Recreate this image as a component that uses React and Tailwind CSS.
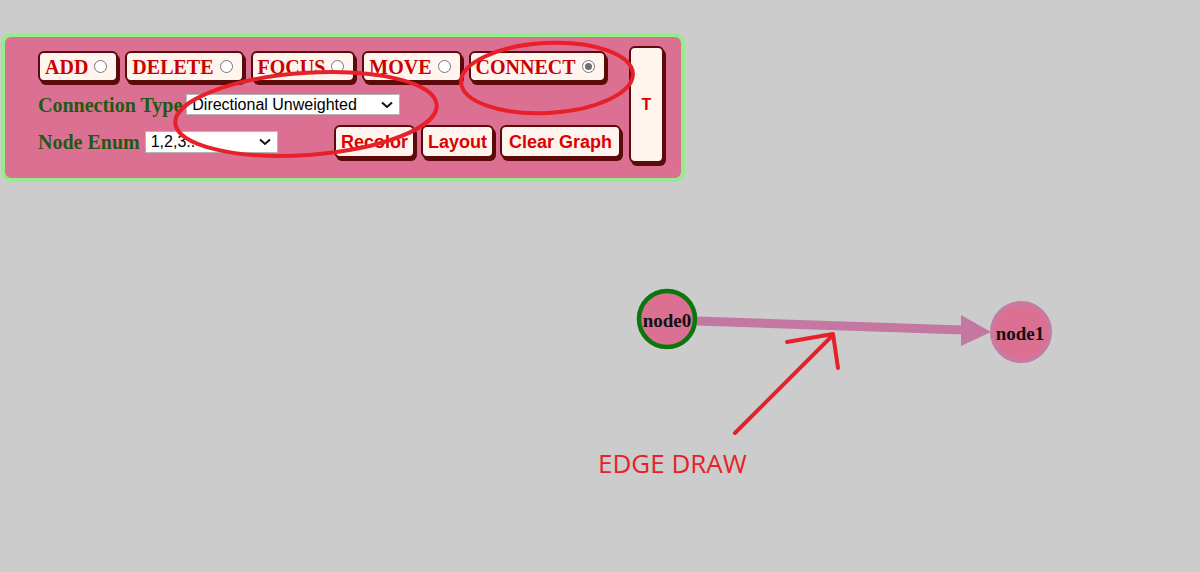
import React from "react";

const serif = "font-['Liberation_Serif','Times_New_Roman',serif]";
const sans = "font-['Liberation_Sans',Arial,sans-serif]";

function Radio({ checked }) {
  return (
    <span className="ml-[6px] mb-[1px] w-[13px] h-[13px] rounded-full border border-[#767676] bg-white flex items-center justify-center shrink-0">
      {checked && <span className="w-[7px] h-[7px] rounded-full bg-[#6f6f6f]" />}
    </span>
  );
}

function ModeButton({ label, checked }) {
  return (
    <div className={`h-[31px] flex items-center pl-[5px] pr-[9px] border-2 border-[#5c0a0a] rounded-[6px] bg-[#fff5ee] shadow-[2px_3px_0_#5c0a0a] ${serif} font-bold text-[20px] leading-none text-[#cc0000]`}>
      <span className="pt-[1px]">{label}</span>
      <Radio checked={checked} />
    </div>
  );
}

function ActionButton({ label, wide }) {
  return (
    <div className={`h-[33px] flex items-center ${wide ? "px-[7px]" : "px-[5px]"} border-2 border-[#5c0a0a] rounded-[6px] bg-[#fff5ee] shadow-[2px_3px_0_#5c0a0a] ${sans} font-bold text-[18px] leading-none text-[#dd0000]`}>
      {label}
    </div>
  );
}

function Select({ value, width, height }) {
  return (
    <div
      className={`${width} ${height} bg-white border border-[#b5b5b5] flex items-center justify-between pl-[5px] pr-[6px] ${sans} text-[16px] leading-none text-black`}
    >
      <span>{value}</span>
      <svg width="12" height="8" viewBox="0 0 12 8" className="shrink-0">
        <path d="M1 1.5 L6 6 L11 1.5" fill="none" stroke="#111" strokeWidth="2" />
      </svg>
    </div>
  );
}

export default function App() {
  return (
    <div className="relative w-[1200px] h-[572px] bg-[#cccccc] overflow-hidden">
      <div className="pt-[33px] pl-[1px]">
        <div className="w-[684px] h-[149px] rounded-[10px] border-4 border-[#94ec8c] bg-[#db7093] flex items-start pl-[33px] pt-[9px]">
          <div className="w-[583px] mt-[5px] flex flex-col">
            <div className="flex gap-[7px]">
              <ModeButton label="ADD" />
              <ModeButton label="DELETE" />
              <ModeButton label="FOCUS" />
              <ModeButton label="MOVE" />
              <ModeButton label="CONNECT" checked />
            </div>
            <div className="mt-[12px] h-[21px] flex items-center">
              <span className={`${serif} font-bold text-[20px] leading-none text-[#1f5a14]`}>Connection Type</span>
              <div className="ml-[4px]">
                <Select value="Directional Unweighted" width="w-[214px]" height="h-[21px]" />
              </div>
            </div>
            <div className="mt-[10px] h-[36px] flex items-start">
              <div className="h-[33px] flex items-center">
                <span className={`${serif} font-bold text-[20px] leading-none text-[#1f5a14]`}>Node Enum</span>
                <div className="ml-[5px]">
                  <Select value="1,2,3.." width="w-[133px]" height="h-[22px]" />
                </div>
              </div>
              <div className="ml-auto flex gap-[6px]">
                <ActionButton label="Recolor" />
                <ActionButton label="Layout" />
                <ActionButton label="Clear Graph" wide />
              </div>
            </div>
          </div>
          <div className={`ml-[8px] w-[35px] h-[117px] flex items-center justify-center border-2 border-[#5c0a0a] rounded-[6px] bg-[#fff5ee] shadow-[2px_3px_0_#5c0a0a] ${sans} font-bold text-[16px] text-[#dd0000]`}>
            T
          </div>
        </div>
      </div>

      <svg className="absolute inset-0 pointer-events-none" width="1200" height="572" viewBox="0 0 1200 572">
        {/* edge */}
        <line x1="697" y1="321" x2="963" y2="330" stroke="#c477a0" strokeWidth="9" />
        <polygon points="991,332 961,315 961,346" fill="#c477a0" />
        {/* node0 */}
        <circle cx="667" cy="319" r="28" fill="#db7093" stroke="#0b760b" strokeWidth="4.5" />
        <text x="667" y="320" textAnchor="middle" dominantBaseline="central" fontFamily="'Liberation Serif', 'Times New Roman', serif" fontWeight="bold" fontSize="19" fill="#111">node0</text>
        {/* node1 */}
        <circle cx="1021" cy="332" r="29" fill="#db7093" stroke="#c87aa3" strokeWidth="4" />
        <text x="1020" y="333" textAnchor="middle" dominantBaseline="central" fontFamily="'Liberation Serif', 'Times New Roman', serif" fontWeight="bold" fontSize="19" fill="#111">node1</text>

        {/* annotations */}
        <ellipse cx="306" cy="114" rx="131" ry="41" transform="rotate(-4 306 114)" fill="none" stroke="#e8202a" strokeWidth="4" />
        <ellipse cx="547" cy="78" rx="86" ry="35" transform="rotate(-3 547 78)" fill="none" stroke="#e8202a" strokeWidth="4" />
        <line x1="735" y1="433" x2="833" y2="335" stroke="#e8202a" strokeWidth="4" strokeLinecap="round" />
        <polyline points="787,342 833,334 838,368" fill="none" stroke="#e8202a" strokeWidth="4" strokeLinecap="round" strokeLinejoin="round" />
        <text x="598" y="473" fontFamily="'Open Sans', 'Noto Sans', sans-serif" fontSize="26" fill="#e62129">EDGE DRAW</text>
      </svg>
    </div>
  );
}
